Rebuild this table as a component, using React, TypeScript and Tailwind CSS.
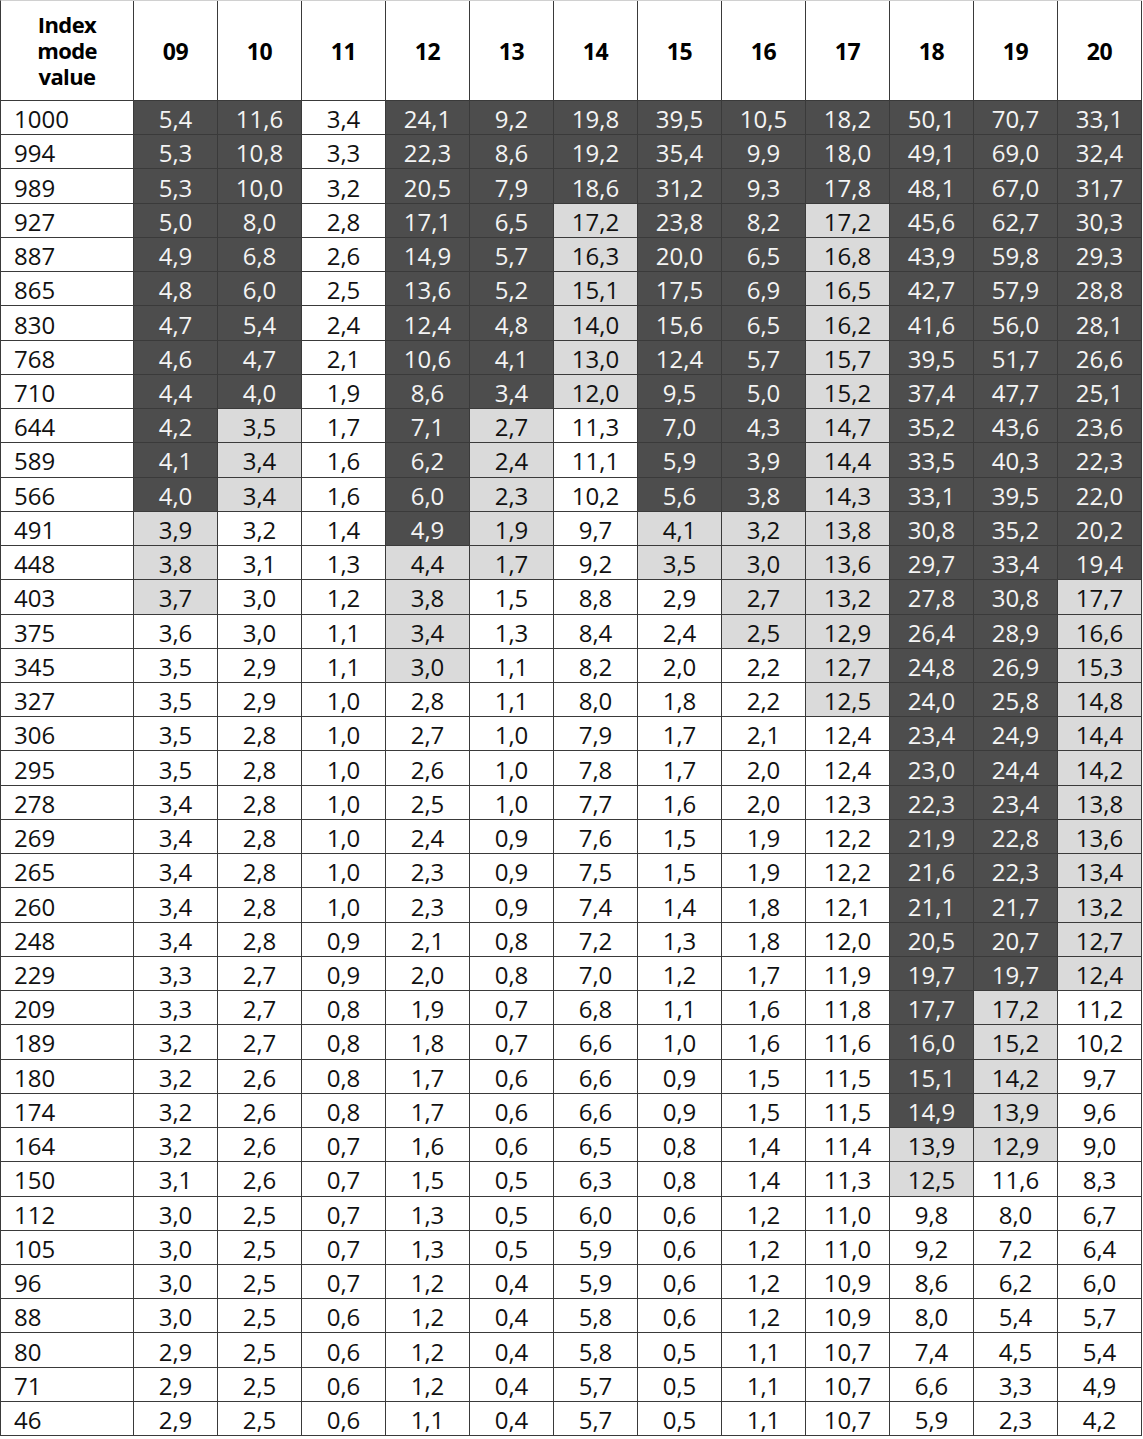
const cols = ['09', '10', '11', '12', '13', '14', '15', '16', '17', '18', '19', '20']

// [index, ...values per column]
const rows: string[][] = [
  ['1000', '5,4', '11,6', '3,4', '24,1', '9,2', '19,8', '39,5', '10,5', '18,2', '50,1', '70,7', '33,1'],
  ['994', '5,3', '10,8', '3,3', '22,3', '8,6', '19,2', '35,4', '9,9', '18,0', '49,1', '69,0', '32,4'],
  ['989', '5,3', '10,0', '3,2', '20,5', '7,9', '18,6', '31,2', '9,3', '17,8', '48,1', '67,0', '31,7'],
  ['927', '5,0', '8,0', '2,8', '17,1', '6,5', '17,2', '23,8', '8,2', '17,2', '45,6', '62,7', '30,3'],
  ['887', '4,9', '6,8', '2,6', '14,9', '5,7', '16,3', '20,0', '6,5', '16,8', '43,9', '59,8', '29,3'],
  ['865', '4,8', '6,0', '2,5', '13,6', '5,2', '15,1', '17,5', '6,9', '16,5', '42,7', '57,9', '28,8'],
  ['830', '4,7', '5,4', '2,4', '12,4', '4,8', '14,0', '15,6', '6,5', '16,2', '41,6', '56,0', '28,1'],
  ['768', '4,6', '4,7', '2,1', '10,6', '4,1', '13,0', '12,4', '5,7', '15,7', '39,5', '51,7', '26,6'],
  ['710', '4,4', '4,0', '1,9', '8,6', '3,4', '12,0', '9,5', '5,0', '15,2', '37,4', '47,7', '25,1'],
  ['644', '4,2', '3,5', '1,7', '7,1', '2,7', '11,3', '7,0', '4,3', '14,7', '35,2', '43,6', '23,6'],
  ['589', '4,1', '3,4', '1,6', '6,2', '2,4', '11,1', '5,9', '3,9', '14,4', '33,5', '40,3', '22,3'],
  ['566', '4,0', '3,4', '1,6', '6,0', '2,3', '10,2', '5,6', '3,8', '14,3', '33,1', '39,5', '22,0'],
  ['491', '3,9', '3,2', '1,4', '4,9', '1,9', '9,7', '4,1', '3,2', '13,8', '30,8', '35,2', '20,2'],
  ['448', '3,8', '3,1', '1,3', '4,4', '1,7', '9,2', '3,5', '3,0', '13,6', '29,7', '33,4', '19,4'],
  ['403', '3,7', '3,0', '1,2', '3,8', '1,5', '8,8', '2,9', '2,7', '13,2', '27,8', '30,8', '17,7'],
  ['375', '3,6', '3,0', '1,1', '3,4', '1,3', '8,4', '2,4', '2,5', '12,9', '26,4', '28,9', '16,6'],
  ['345', '3,5', '2,9', '1,1', '3,0', '1,1', '8,2', '2,0', '2,2', '12,7', '24,8', '26,9', '15,3'],
  ['327', '3,5', '2,9', '1,0', '2,8', '1,1', '8,0', '1,8', '2,2', '12,5', '24,0', '25,8', '14,8'],
  ['306', '3,5', '2,8', '1,0', '2,7', '1,0', '7,9', '1,7', '2,1', '12,4', '23,4', '24,9', '14,4'],
  ['295', '3,5', '2,8', '1,0', '2,6', '1,0', '7,8', '1,7', '2,0', '12,4', '23,0', '24,4', '14,2'],
  ['278', '3,4', '2,8', '1,0', '2,5', '1,0', '7,7', '1,6', '2,0', '12,3', '22,3', '23,4', '13,8'],
  ['269', '3,4', '2,8', '1,0', '2,4', '0,9', '7,6', '1,5', '1,9', '12,2', '21,9', '22,8', '13,6'],
  ['265', '3,4', '2,8', '1,0', '2,3', '0,9', '7,5', '1,5', '1,9', '12,2', '21,6', '22,3', '13,4'],
  ['260', '3,4', '2,8', '1,0', '2,3', '0,9', '7,4', '1,4', '1,8', '12,1', '21,1', '21,7', '13,2'],
  ['248', '3,4', '2,8', '0,9', '2,1', '0,8', '7,2', '1,3', '1,8', '12,0', '20,5', '20,7', '12,7'],
  ['229', '3,3', '2,7', '0,9', '2,0', '0,8', '7,0', '1,2', '1,7', '11,9', '19,7', '19,7', '12,4'],
  ['209', '3,3', '2,7', '0,8', '1,9', '0,7', '6,8', '1,1', '1,6', '11,8', '17,7', '17,2', '11,2'],
  ['189', '3,2', '2,7', '0,8', '1,8', '0,7', '6,6', '1,0', '1,6', '11,6', '16,0', '15,2', '10,2'],
  ['180', '3,2', '2,6', '0,8', '1,7', '0,6', '6,6', '0,9', '1,5', '11,5', '15,1', '14,2', '9,7'],
  ['174', '3,2', '2,6', '0,8', '1,7', '0,6', '6,6', '0,9', '1,5', '11,5', '14,9', '13,9', '9,6'],
  ['164', '3,2', '2,6', '0,7', '1,6', '0,6', '6,5', '0,8', '1,4', '11,4', '13,9', '12,9', '9,0'],
  ['150', '3,1', '2,6', '0,7', '1,5', '0,5', '6,3', '0,8', '1,4', '11,3', '12,5', '11,6', '8,3'],
  ['112', '3,0', '2,5', '0,7', '1,3', '0,5', '6,0', '0,6', '1,2', '11,0', '9,8', '8,0', '6,7'],
  ['105', '3,0', '2,5', '0,7', '1,3', '0,5', '5,9', '0,6', '1,2', '11,0', '9,2', '7,2', '6,4'],
  ['96', '3,0', '2,5', '0,7', '1,2', '0,4', '5,9', '0,6', '1,2', '10,9', '8,6', '6,2', '6,0'],
  ['88', '3,0', '2,5', '0,6', '1,2', '0,4', '5,8', '0,6', '1,2', '10,9', '8,0', '5,4', '5,7'],
  ['80', '2,9', '2,5', '0,6', '1,2', '0,4', '5,8', '0,5', '1,1', '10,7', '7,4', '4,5', '5,4'],
  ['71', '2,9', '2,5', '0,6', '1,2', '0,4', '5,7', '0,5', '1,1', '10,7', '6,6', '3,3', '4,9'],
  ['46', '2,9', '2,5', '0,6', '1,1', '0,4', '5,7', '0,5', '1,1', '10,7', '5,9', '2,3', '4,2'],
]

// per column: rows before darkEnd are dark, rows before lightEnd are light grey
const shade: [number, number][] = [
  [12, 15], // 09
  [9, 12], // 10
  [0, 0], // 11
  [13, 17], // 12
  [9, 14], // 13
  [3, 9], // 14
  [12, 14], // 15
  [12, 16], // 16
  [3, 18], // 17
  [30, 32], // 18
  [26, 31], // 19
  [14, 26], // 20
]

function cellClass(col: number, row: number) {
  const [darkEnd, lightEnd] = shade[col]
  if (row < darkEnd) return 'bg-[#4d4d4d] text-[#f4f4f4]'
  if (row < lightEnd) return 'bg-[#dadada] text-[#111]'
  return 'bg-white text-[#111]'
}

export default function App() {
  return (
    <div
      className="bg-white w-[1143px] h-[1439px]"
      style={{ fontFamily: '"Open Sans", "Noto Sans", sans-serif' }}
    >
      <div className="grid grid-cols-[133px_repeat(12,84px)] grid-rows-[100px_repeat(39,34.24px)] border-l border-t border-l-[#3a3a3a] border-t-[#d0d0d0] w-fit">
        <div className="flex flex-col items-center justify-center border-r border-b border-[#3a3a3a] text-[22px] font-bold tracking-[-0.6px] text-black pb-[2px]">
          <span className="h-[26px] leading-[26px]">Index</span>
          <span className="h-[26px] leading-[26px]">mode</span>
          <span className="h-[26px] leading-[26px]">value</span>
        </div>
        {cols.map((c) => (
          <div
            key={c}
            className="flex items-center justify-center border-r border-b border-[#3a3a3a] text-[23px] font-bold text-black tracking-[-0.4px] pt-[2px]"
          >
            {c}
          </div>
        ))}
        {rows.map((r, ri) => (
          <Row key={r[0]} r={r} ri={ri} />
        ))}
      </div>
    </div>
  )
}

function Row({ r, ri }: { r: string[]; ri: number }) {
  return (
    <>
      <div className="flex items-center pl-[13px] pt-[3px] border-r border-b border-[#3a3a3a] text-[24px] text-[#111] leading-none">
        {r[0]}
      </div>
      {r.slice(1).map((v, ci) => (
        <div
          key={ci}
          className={`flex items-center justify-center pt-[3px] border-r border-b border-[#3a3a3a] text-[24px] leading-none ${cellClass(ci, ri)}`}
        >
          {v}
        </div>
      ))}
    </>
  )
}
